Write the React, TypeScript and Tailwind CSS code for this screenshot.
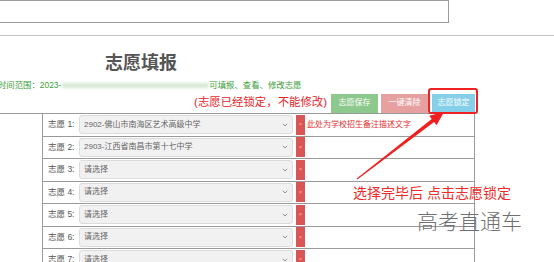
const rows = [
  { n: 1, value: '2902-佛山市南海区艺术高级中学', note: '此处为学校招生备注描述文字' },
  { n: 2, value: '2903-江西省南昌市第十七中学', note: '' },
  { n: 3, value: '请选择', note: '' },
  { n: 4, value: '请选择', note: '' },
  { n: 5, value: '请选择', note: '' },
  { n: 6, value: '请选择', note: '' },
  { n: 7, value: '请选择', note: '' },
];

const font = { fontFamily: '"Liberation Sans", "Noto Sans CJK SC", sans-serif' };

function Chevron() {
  return (
    <svg width="6" height="4" viewBox="0 0 6 4" className="shrink-0">
      <path d="M0.8 0.8 L3 3 L5.2 0.8" fill="none" stroke="#888" strokeWidth="0.9" />
    </svg>
  );
}

function ChoiceRow({ n, value, note }: { n: number; value: string; note: string }) {
  return (
    <div className="flex items-center h-[22.5px] border-b border-[#9a9a9a] shrink-0">
      <span className="w-[36px] pl-[5px] text-[8.5px] text-[#555] whitespace-nowrap">志愿 {n}:</span>
      <div className="w-[214px] h-[19px] flex items-center justify-between px-[4px] bg-[#f1f1f1] border border-[#dcdcdc] rounded-[3px]">
        <span className="text-[8px] text-[#666] whitespace-nowrap">{value}</span>
        <Chevron />
      </div>
      <div className="ml-[3px] w-[9px] h-[20px] bg-[#d95656] flex items-center justify-center text-[6px] text-[#f3b0b0]">×</div>
      {note && <span className="ml-[2px] text-[8px] text-[#e53030] whitespace-nowrap">{note}</span>}
    </div>
  );
}

export default function App() {
  return (
    <div className="relative w-[554px] h-[262px] overflow-hidden bg-white" style={font}>
      {/* 顶部输入框 */}
      <div className="w-[449px] h-[23px] border border-l-0 border-[#9a9a9a] bg-white" />
      <div className="mt-[12px] h-px bg-[#c4c4c4]" />

      <div className="w-[282px] mt-[16px] text-center text-[18px] leading-[22px] font-bold text-[#555]">志愿填报</div>

      <div className="flex items-center h-[12px] mt-[5px] text-[8.4px] text-[#3a9d3a] whitespace-nowrap">
        <span className="-ml-[2px]">时间范围：2023-</span>
        <div className="w-[148px] h-[5px] rounded-full bg-[#d4ead4] blur-[1.5px]" />
        <span>可填报、查看、修改志愿</span>
      </div>

      <div className="w-[475px] flex items-center justify-end gap-[3px] h-[20px] mt-[2px]">
        <span className="mr-[1px] text-[11.4px] text-[#e8262a] whitespace-nowrap">(志愿已经锁定，不能修改)</span>
        <div className="w-[47px] h-[19px] flex items-center justify-center bg-[#8dc98d] text-[8px] text-white">志愿保存</div>
        <div className="w-[47px] h-[19px] flex items-center justify-center bg-[#e7a0a0] text-[8px] text-white">一键清除</div>
        <div className="w-[43px] h-[19px] ml-[1px] flex items-center justify-center bg-[#86cfe8] text-[8px] text-white">志愿锁定</div>
      </div>

      {/* 志愿表 */}
      <div className="w-[475px] border-t border-[#9a9a9a]">
        <div className="ml-[42px] w-[433px] flex flex-col border-l border-r border-[#9a9a9a]">
          {rows.map((r) => (
            <ChoiceRow key={r.n} n={r.n} value={r.value} note={r.note} />
          ))}
        </div>
      </div>

      {/* 标注 */}
      <div className="absolute left-[428px] top-[88px] w-[50px] h-[26px] border-2 border-[#ee2222] rounded-[3px]" />
      <svg className="absolute left-0 top-0" width="554" height="262" viewBox="0 0 554 262">
        <polygon
          points="356.7,178.6 431.7,118.9 429.2,115.8 444,112 436.6,125.2 434.1,122.1 357.3,179.4"
          fill="#f02020"
        />
      </svg>
      <div className="absolute left-[353px] top-[184px] text-[14px] leading-[18px] text-[#ee2a2a] whitespace-nowrap">
        选择完毕后 点击志愿锁定
      </div>
      <div className="absolute left-[417px] top-[209px] text-[21px] leading-[26px] font-light text-[#707070] whitespace-nowrap">
        高考直通车
      </div>
    </div>
  );
}
